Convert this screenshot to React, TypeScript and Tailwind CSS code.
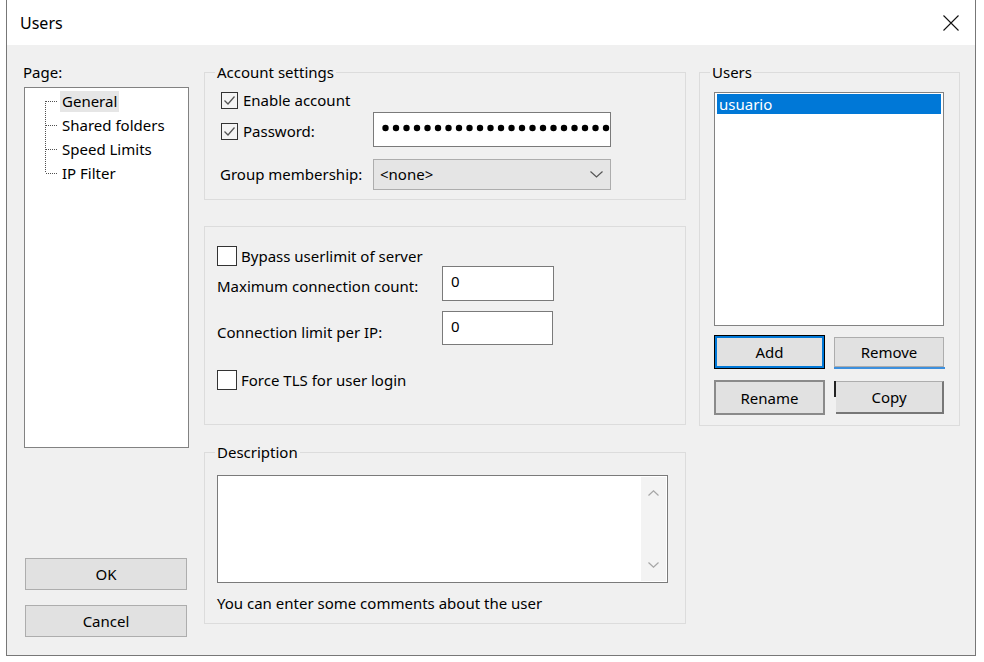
import React from "react";

function CheckBox({ checked, big }: { checked?: boolean; big?: boolean }) {
  if (big) {
    return (
      <div className="w-[20px] h-[20px] border border-[#333333] bg-white shrink-0" />
    );
  }
  return (
    <div className="w-[17px] h-[17px] border border-[#333333] bg-[#f4f4f4] shrink-0 flex items-center justify-center">
      {checked && (
        <svg width="15" height="15" viewBox="0 0 15 15">
          <path d="M2.5 7.5 L6 11 L12.5 3.5" fill="none" stroke="#555555" strokeWidth="1.3" />
        </svg>
      )}
    </div>
  );
}

function TreeRow({ label, pos, selected }: { label: string; pos: "first" | "mid" | "last"; selected?: boolean }) {
  return (
    <div className="h-[24px] flex items-center pl-[20px]">
      <svg width="14" height="24" viewBox="0 0 14 24" className="shrink-0">
        {pos === "first" && <line x1="0.5" y1="12" x2="0.5" y2="24" stroke="#505050" strokeDasharray="1 1" />}
        {pos === "mid" && <line x1="0.5" y1="0" x2="0.5" y2="24" stroke="#505050" strokeDasharray="1 1" />}
        {pos === "last" && <line x1="0.5" y1="0" x2="0.5" y2="12" stroke="#505050" strokeDasharray="1 1" />}
        <line x1="1" y1="12.5" x2="13" y2="12.5" stroke="#505050" strokeDasharray="1 1" />
      </svg>
      <div className={selected ? "ml-[1px] px-[2px] h-[21px] leading-[21px] bg-[#e6e6e6]" : "ml-[1px] px-[2px] h-[21px] leading-[21px]"}>
        {label}
      </div>
    </div>
  );
}

function Button({ label, className }: { label: string; className: string }) {
  return (
    <div className={"flex items-center justify-center bg-[#e1e1e1] " + className}>
      {label}
    </div>
  );
}

export default function App() {
  const dots = Array.from({ length: 22 }, (_, i) => i);
  return (
    <div className="w-[984px] h-[662px] bg-white font-['Noto_Sans',sans-serif] text-[15px] leading-[20px] text-black">
      <div className="ml-[6px] w-[970px] h-[656px] border-x border-b border-[#777777] flex flex-col">
        <div className="h-[45px] shrink-0 bg-white flex items-center justify-between pl-[13px] pr-[16px]">
          <span className="text-[16px]">Users</span>
          <svg width="16" height="16" viewBox="0 0 16 16">
            <path d="M0.5 0.5 L15.5 15.5 M15.5 0.5 L0.5 15.5" stroke="#111111" strokeWidth="1.1" fill="none" />
          </svg>
        </div>
        <div className="flex-1 bg-[#f0f0f0] flex pl-[17px] pt-[17px]">
          {/* Left column */}
          <div className="w-[165px] flex flex-col">
            <div className="h-[20px] -ml-[1px]">Page:</div>
            <div className="mt-[5px] h-[361px] border border-[#828282] bg-white pt-[1px]">
              <TreeRow label="General" pos="first" selected />
              <TreeRow label="Shared folders" pos="mid" />
              <TreeRow label="Speed Limits" pos="mid" />
              <TreeRow label="IP Filter" pos="last" />
            </div>
            <Button label="OK" className="mt-[110px] ml-[1px] w-[162px] h-[32px] border border-[#adadad]" />
            <Button label="Cancel" className="mt-[15px] ml-[1px] w-[162px] h-[32px] border border-[#adadad]" />
          </div>

          {/* Middle column */}
          <div className="ml-[15px] w-[482px] flex flex-col">
            <fieldset className="border border-[#dcdcdc] pb-[9px]">
              <legend className="ml-[10px] px-[2px] leading-[20px]">Account settings</legend>
              <div className="mt-[8px] h-[20px] flex items-center pl-[16px] gap-[5px]">
                <CheckBox checked />
                <span>Enable account</span>
              </div>
              <div className="mt-[2px] h-[35px] flex items-center">
                <div className="w-[168px] pl-[16px] flex items-center gap-[5px] mt-[3px]">
                  <CheckBox checked />
                  <span>Password:</span>
                </div>
                <div className="w-[238px] h-[35px] border border-[#7a7a7a] bg-white overflow-hidden flex items-center pl-[8px]">
                  <svg width="230" height="8" viewBox="0 0 230 8" className="shrink-0 -mt-[3px]">
                    {dots.map((i) => (
                      <circle key={i} cx={3.5 + i * 10.5} cy={4} r={3.2} fill="#000000" />
                    ))}
                  </svg>
                </div>
              </div>
              <div className="mt-[12px] h-[31px] flex items-center">
                <div className="w-[168px] pl-[15px] -mt-[2px]">Group membership:</div>
                <div className="w-[238px] h-[31px] border border-[#adadad] bg-[#e5e5e5] flex items-center justify-between pl-[6px] pr-[7px]">
                  <span className="-mt-[1px]">&lt;none&gt;</span>
                  <svg width="13" height="7" viewBox="0 0 13 7">
                    <path d="M0.5 0.5 L6.5 6 L12.5 0.5" fill="none" stroke="#555555" strokeWidth="1.2" />
                  </svg>
                </div>
              </div>
            </fieldset>

            <div className="mt-[26px] border border-[#dcdcdc] pt-[19px] pb-[34px]">
              <div className="h-[20px] flex items-center pl-[12px] gap-[4px]">
                <CheckBox big />
                <span>Bypass userlimit of server</span>
              </div>
              <div className="h-[35px] flex">
                <div className="w-[237px] pl-[12px] pt-[10px]">Maximum connection count:</div>
                <div className="w-[112px] h-[35px] border border-[#7a7a7a] bg-white pl-[8px] pt-[4px]">0</div>
              </div>
              <div className="mt-[10px] h-[34px] flex">
                <div className="w-[237px] pl-[12px] pt-[11px]">Connection limit per IP:</div>
                <div className="w-[111px] h-[34px] border border-[#7a7a7a] bg-white pl-[8px] pt-[4px]">0</div>
              </div>
              <div className="mt-[25px] h-[20px] flex items-center pl-[12px] gap-[4px]">
                <CheckBox big />
                <span>Force TLS for user login</span>
              </div>
            </div>

            <fieldset className="mt-[17px] border border-[#dcdcdc] pb-[10px]">
              <legend className="ml-[10px] px-[2px] leading-[20px]">Description</legend>
              <div className="mt-[13px] ml-[12px] w-[451px] h-[108px] border border-[#7a7a7a] bg-white flex justify-end p-[1px]">
                <div className="w-[25px] h-full bg-[#f3f3f3] flex flex-col items-center justify-between py-[13px]">
                  <svg width="11" height="6" viewBox="0 0 11 6">
                    <path d="M0.5 5.5 L5.5 0.8 L10.5 5.5" fill="none" stroke="#a6a6a6" strokeWidth="1.2" />
                  </svg>
                  <svg width="11" height="6" viewBox="0 0 11 6">
                    <path d="M0.5 0.5 L5.5 5.2 L10.5 0.5" fill="none" stroke="#a6a6a6" strokeWidth="1.2" />
                  </svg>
                </div>
              </div>
              <div className="mt-[10px] ml-[12px]">You can enter some comments about the user</div>
            </fieldset>
          </div>

          {/* Right column */}
          <div className="ml-[13px] w-[261px] flex flex-col">
            <fieldset className="border border-[#dcdcdc] pb-[10px]">
              <legend className="ml-[10px] px-[2px] leading-[20px]">Users</legend>
              <div className="mt-[10px] ml-[14px] w-[230px] h-[234px] border border-[#828282] bg-white pt-[1px] pl-[2px]">
                <div className="w-[224px] h-[20px] bg-[#0078d7] text-white pl-[2px] leading-[20px]">usuario</div>
              </div>
              <div className="mt-[9px] ml-[14px] flex">
                <Button
                  label="Add"
                  className="w-[111px] h-[34px] border border-black shadow-[inset_0_0_0_2px_#0078d7]"
                />
                <div className="ml-[9px] w-[111px] h-[34px] flex flex-col">
                  <Button label="Remove" className="mt-[2px] w-[110px] h-[30px] border border-[#adadad]" />
                  <div className="h-[2px] w-[111px] bg-[#3c8fdd]" />
                </div>
              </div>
              <div className="mt-[11px] ml-[14px] flex">
                <Button label="Rename" className="w-[111px] h-[35px] border-2 border-[#8a8a8a]" />
                <div className="ml-[9px] w-[111px] h-[35px] pt-[1px] flex">
                  <div className="w-[2px] h-[16px] bg-[#222222] shrink-0" />
                  <Button
                    label="Copy"
                    className="w-[108px] h-[33px] border border-[#adadad] border-l-0 border-r-2 border-r-[#777777] border-b-2 border-b-[#777777]"
                  />
                </div>
              </div>
            </fieldset>
          </div>
        </div>
      </div>
    </div>
  );
}
